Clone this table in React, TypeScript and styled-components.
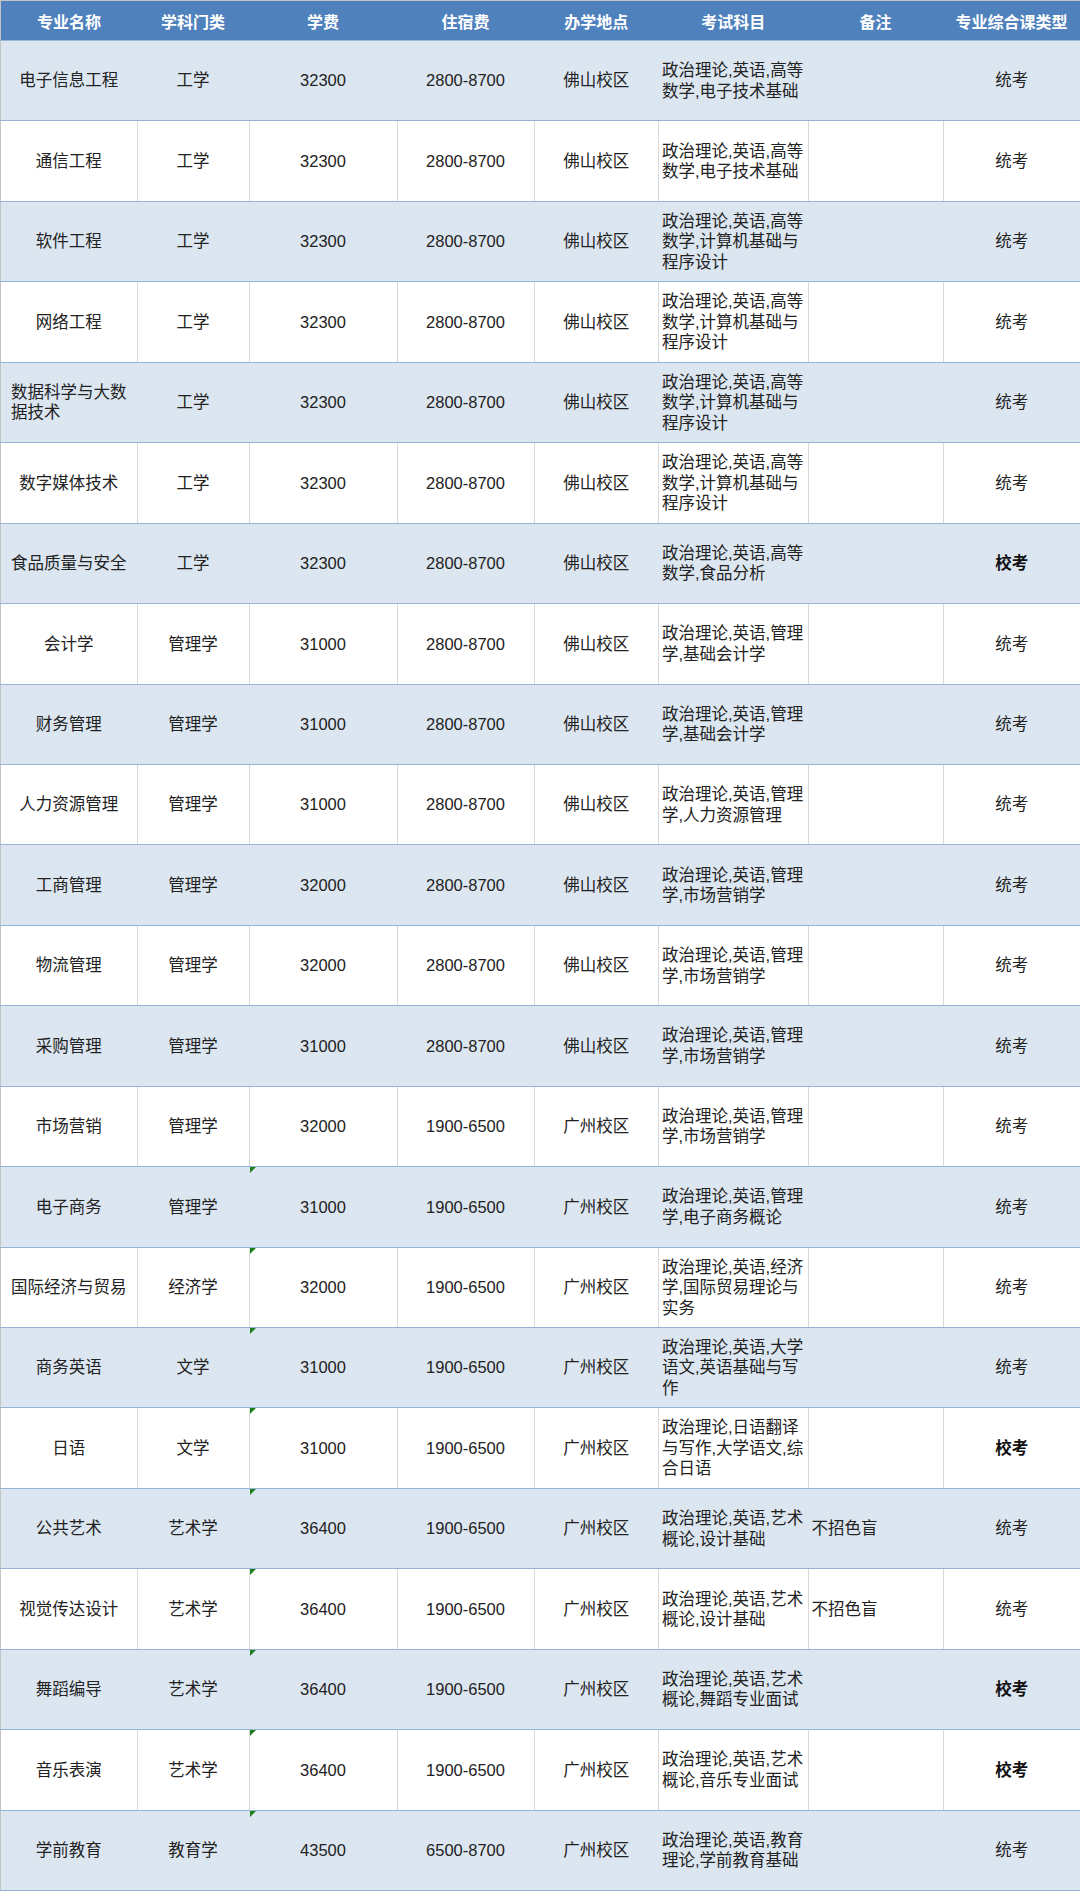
import React from "react";
import styled, { createGlobalStyle, css } from "styled-components";

const GlobalStyle = createGlobalStyle`
  html, body {
    margin: 0;
    padding: 0;
    background: #ffffff;
  }
  body {
    font-family: "Liberation Sans", "Noto Sans CJK SC", Arial, sans-serif;
    color: #1f1f1f;
  }
`;

type Row = {
  name: string[];
  cat: string;
  fee: string;
  dorm: string;
  campus: string;
  exam: string[];
  note: string;
  type: string;
  tri?: boolean;
};

const E1 = ["政治理论,英语,高等", "数学,电子技术基础"];
const E2 = ["政治理论,英语,高等", "数学,计算机基础与", "程序设计"];

const rows: Row[] = [
  { name: ["电子信息工程"], cat: "工学", fee: "32300", dorm: "2800-8700", campus: "佛山校区", exam: E1, note: "", type: "统考" },
  { name: ["通信工程"], cat: "工学", fee: "32300", dorm: "2800-8700", campus: "佛山校区", exam: E1, note: "", type: "统考" },
  { name: ["软件工程"], cat: "工学", fee: "32300", dorm: "2800-8700", campus: "佛山校区", exam: E2, note: "", type: "统考" },
  { name: ["网络工程"], cat: "工学", fee: "32300", dorm: "2800-8700", campus: "佛山校区", exam: E2, note: "", type: "统考" },
  { name: ["数据科学与大数", "据技术"], cat: "工学", fee: "32300", dorm: "2800-8700", campus: "佛山校区", exam: E2, note: "", type: "统考" },
  { name: ["数字媒体技术"], cat: "工学", fee: "32300", dorm: "2800-8700", campus: "佛山校区", exam: E2, note: "", type: "统考" },
  { name: ["食品质量与安全"], cat: "工学", fee: "32300", dorm: "2800-8700", campus: "佛山校区", exam: ["政治理论,英语,高等", "数学,食品分析"], note: "", type: "校考" },
  { name: ["会计学"], cat: "管理学", fee: "31000", dorm: "2800-8700", campus: "佛山校区", exam: ["政治理论,英语,管理", "学,基础会计学"], note: "", type: "统考" },
  { name: ["财务管理"], cat: "管理学", fee: "31000", dorm: "2800-8700", campus: "佛山校区", exam: ["政治理论,英语,管理", "学,基础会计学"], note: "", type: "统考" },
  { name: ["人力资源管理"], cat: "管理学", fee: "31000", dorm: "2800-8700", campus: "佛山校区", exam: ["政治理论,英语,管理", "学,人力资源管理"], note: "", type: "统考" },
  { name: ["工商管理"], cat: "管理学", fee: "32000", dorm: "2800-8700", campus: "佛山校区", exam: ["政治理论,英语,管理", "学,市场营销学"], note: "", type: "统考" },
  { name: ["物流管理"], cat: "管理学", fee: "32000", dorm: "2800-8700", campus: "佛山校区", exam: ["政治理论,英语,管理", "学,市场营销学"], note: "", type: "统考" },
  { name: ["采购管理"], cat: "管理学", fee: "31000", dorm: "2800-8700", campus: "佛山校区", exam: ["政治理论,英语,管理", "学,市场营销学"], note: "", type: "统考" },
  { name: ["市场营销"], cat: "管理学", fee: "32000", dorm: "1900-6500", campus: "广州校区", exam: ["政治理论,英语,管理", "学,市场营销学"], note: "", type: "统考" },
  { name: ["电子商务"], cat: "管理学", fee: "31000", dorm: "1900-6500", campus: "广州校区", exam: ["政治理论,英语,管理", "学,电子商务概论"], note: "", type: "统考", tri: true },
  { name: ["国际经济与贸易"], cat: "经济学", fee: "32000", dorm: "1900-6500", campus: "广州校区", exam: ["政治理论,英语,经济", "学,国际贸易理论与", "实务"], note: "", type: "统考", tri: true },
  { name: ["商务英语"], cat: "文学", fee: "31000", dorm: "1900-6500", campus: "广州校区", exam: ["政治理论,英语,大学", "语文,英语基础与写", "作"], note: "", type: "统考", tri: true },
  { name: ["日语"], cat: "文学", fee: "31000", dorm: "1900-6500", campus: "广州校区", exam: ["政治理论,日语翻译", "与写作,大学语文,综", "合日语"], note: "", type: "校考", tri: true },
  { name: ["公共艺术"], cat: "艺术学", fee: "36400", dorm: "1900-6500", campus: "广州校区", exam: ["政治理论,英语,艺术", "概论,设计基础"], note: "不招色盲", type: "统考", tri: true },
  { name: ["视觉传达设计"], cat: "艺术学", fee: "36400", dorm: "1900-6500", campus: "广州校区", exam: ["政治理论,英语,艺术", "概论,设计基础"], note: "不招色盲", type: "统考", tri: true },
  { name: ["舞蹈编导"], cat: "艺术学", fee: "36400", dorm: "1900-6500", campus: "广州校区", exam: ["政治理论,英语,艺术", "概论,舞蹈专业面试"], note: "", type: "校考", tri: true },
  { name: ["音乐表演"], cat: "艺术学", fee: "36400", dorm: "1900-6500", campus: "广州校区", exam: ["政治理论,英语,艺术", "概论,音乐专业面试"], note: "", type: "校考", tri: true },
  { name: ["学前教育"], cat: "教育学", fee: "43500", dorm: "6500-8700", campus: "广州校区", exam: ["政治理论,英语,教育", "理论,学前教育基础"], note: "", type: "统考", tri: true },
];

const widths = [136.5, 112, 148, 137, 124.5, 149.5, 135, 137.5];
const headers = ["专业名称", "学科门类", "学费", "住宿费", "办学地点", "考试科目", "备注", "专业综合课类型"];

const Table = styled.table`
  width: 1080px;
  table-layout: fixed;
  border-collapse: collapse;
  border-spacing: 0;
  font-size: 16.5px;
`;

const HeadRow = styled.tr`
  height: 40px;
  background: #4f81bd;
`;

const HeadCell = styled.th`
  padding: 0;
  color: #ffffff;
  font-weight: bold;
  font-size: 16px;
  text-align: center;
  vertical-align: middle;
  border-top: 1px solid #c4c4c4;
  border-bottom: 1px solid #9bb7da;
  &:first-child {
    border-left: 1px solid #c4c4c4;
  }
  &:last-child {
    border-right: 1px solid #c4c4c4;
  }
`;

const BodyRow = styled.tr<{ $shaded: boolean }>`
  height: 80.45px;
  background: ${(p) => (p.$shaded ? "#dce6f1" : "#ffffff")};
`;

const Cell = styled.td<{ $shaded: boolean; $align?: "left" | "center"; $bold?: boolean }>`
  position: relative;
  padding: 0;
  text-align: ${(p) => p.$align ?? "center"};
  vertical-align: middle;
  line-height: 20.5px;
  font-weight: ${(p) => (p.$bold ? 600 : "normal")};
  color: ${(p) => (p.$bold ? "#111" : "#222")};
  border-bottom: 1px solid #95b3d7;
  border-right: 1px solid ${(p) => (p.$shaded ? "#dce6f1" : "#d9d9d9")};
  &:first-child {
    border-left: 1px solid #c4c4c4;
  }
  &:last-child {
    border-right: 1px solid #b9c9de;
  }
  ${(p) =>
    p.$align === "left" &&
    css`
      padding-left: 3px;
    `}
`;

const Lines = styled.span`
  display: inline-block;
  text-align: left;
`;

const Line = styled.span`
  display: block;
  white-space: nowrap;
`;

const Marker = styled.span`
  position: absolute;
  top: 0;
  left: 0;
  width: 0;
  height: 0;
  border-top: 6px solid #1f7f1f;
  border-right: 6px solid transparent;
`;

const renderLines = (lines: string[]) =>
  lines.length === 1 ? lines[0] : (
    <Lines>
      {lines.map((l, i) => (
        <Line key={i}>{l}</Line>
      ))}
    </Lines>
  );

export default function App() {
  return (
    <>
      <GlobalStyle />
      <Table>
        <colgroup>
          {widths.map((w, i) => (
            <col key={i} style={{ width: `${w}px` }} />
          ))}
        </colgroup>
        <thead>
          <HeadRow>
            {headers.map((h) => (
              <HeadCell key={h}>{h}</HeadCell>
            ))}
          </HeadRow>
        </thead>
        <tbody>
          {rows.map((r, i) => {
            const s = i % 2 === 0;
            return (
              <BodyRow key={i} $shaded={s}>
                <Cell $shaded={s}>{renderLines(r.name)}</Cell>
                <Cell $shaded={s}>{r.cat}</Cell>
                <Cell $shaded={s}>
                  {r.tri && <Marker />}
                  {r.fee}
                </Cell>
                <Cell $shaded={s}>{r.dorm}</Cell>
                <Cell $shaded={s}>{r.campus}</Cell>
                <Cell $shaded={s} $align="left">
                  {r.exam.map((l, k) => (
                    <Line key={k}>{l}</Line>
                  ))}
                </Cell>
                <Cell $shaded={s} $align="left">{r.note}</Cell>
                <Cell $shaded={s} $bold={r.type === "校考"}>{r.type}</Cell>
              </BodyRow>
            );
          })}
        </tbody>
      </Table>
    </>
  );
}
